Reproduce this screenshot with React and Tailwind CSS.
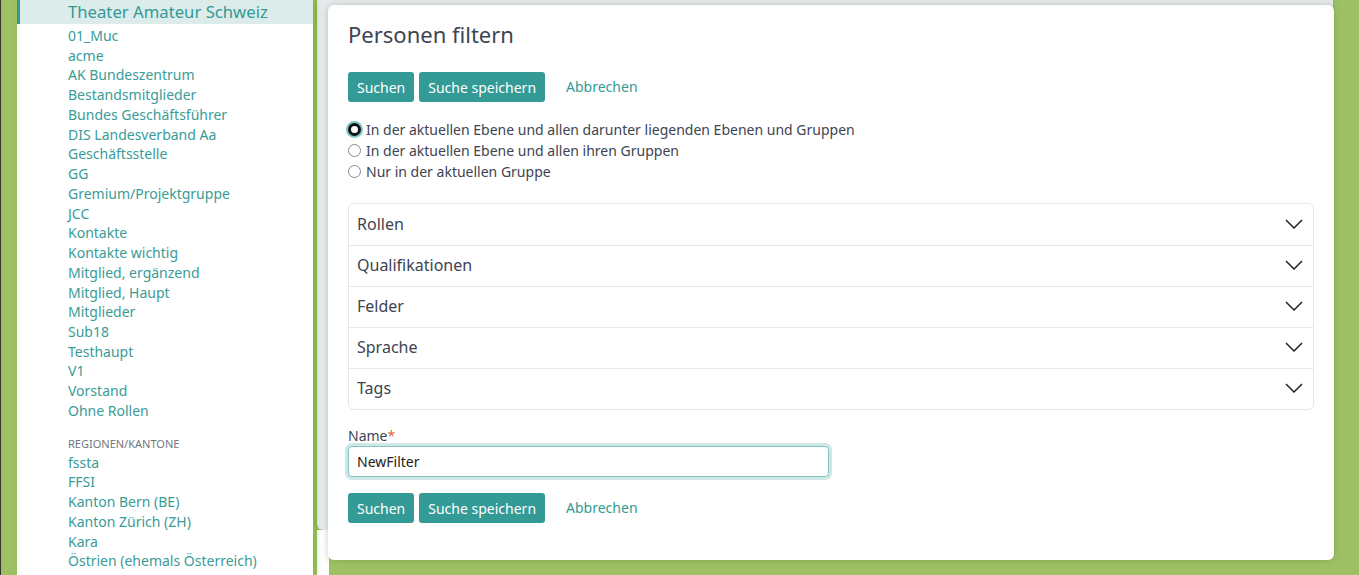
import React from "react";

const groups = [
  "01_Muc","acme","AK Bundeszentrum","Bestandsmitglieder","Bundes Geschäftsführer","DIS Landesverband Aa","Geschäftsstelle","GG","Gremium/Projektgruppe","JCC","Kontakte","Kontakte wichtig","Mitglied, ergänzend","Mitglied, Haupt","Mitglieder","Sub18","Testhaupt","V1","Vorstand","Ohne Rollen",
];
const regions = ["fssta","FFSI","Kanton Bern (BE)","Kanton Zürich (ZH)","Kara","Östrien (ehemals Österreich)"];
const sections = ["Rollen","Qualifikationen","Felder","Sprache","Tags"];

function Chevron() {
  return (
    <svg width="18" height="10" viewBox="0 0 18 10" fill="none">
      <polyline points="1,1 9,9 17,1" stroke="#222" strokeWidth="1.5" />
    </svg>
  );
}

function Buttons() {
  return (
    <div className="flex items-center gap-[5px]">
      <button className="h-[30px] px-[9px] rounded-[3px] bg-[#339a96] text-white text-[14px]">Suchen</button>
      <button className="h-[30px] px-[9px] rounded-[3px] bg-[#339a96] text-white text-[14px]">Suche speichern</button>
      <a className="ml-[16px] text-[14px] text-[#339a96] -mt-[2px]">Abbrechen</a>
    </div>
  );
}

function Radio({ checked, label }) {
  return (
    <label className="flex items-center h-[21px] text-[14px] text-[#3d4452]">
      {checked ? (
        <span className="w-[13px] h-[13px] rounded-full border-[3px] border-[#111] bg-white ring-[2px] ring-[#7cc8c4] mr-[5px] box-border" />
      ) : (
        <span className="w-[13px] h-[13px] rounded-full border-[1.5px] border-[#858a92] bg-white mr-[5px] box-border" />
      )}
      {label}
    </label>
  );
}

export default function App() {
  return (
    <div className="relative w-[1359px] h-[575px] overflow-hidden bg-[#9cc063] flex" style={{ fontFamily: '"Noto Sans", "Open Sans", sans-serif' }}>
      <div className="w-[1px] bg-[#333]" />
      <div className="w-[16px]" />
      <aside className="w-[296px] bg-white shadow-[3px_0_5px_rgba(120,170,60,0.5)] z-10 shrink-0">
        <div className="h-[25px] bg-[#dbeceb] border-l-[3px] border-[#339a96] pl-[48px] flex items-center text-[16.7px] text-[#339a96] -mt-[1px]">
          Theater Amateur Schweiz
        </div>
        <ul className="pt-[2px] pl-[51px]">
          {groups.map((g) => (
            <li key={g} className="text-[14px] leading-[19.74px] text-[#3a9c97]">{g}</li>
          ))}
        </ul>
        <div className="pl-[51px] mt-[14px] text-[11px] leading-[18px] text-[#74777d] uppercase">Regionen/Kantone</div>
        <ul className="pl-[51px]">
          {regions.map((g) => (
            <li key={g} className="text-[14px] leading-[19.74px] text-[#3a9c97]">{g}</li>
          ))}
        </ul>
      </aside>
      <div className="ml-[4px] flex flex-col">
        <div className="w-[1016px] h-[530px] bg-[#e7eaee] rounded-b-[6px] shadow-[-2px_0_4px_rgba(120,170,60,0.6)]" />
        <div className="w-[12px] flex-1 bg-white" />
      </div>

      <div className="absolute left-[328px] top-[5px] w-[1006px] h-[555px] bg-white rounded-[6px] shadow-[0_0_6px_rgba(90,120,50,0.35)] pl-[20px] pr-[20px] pt-[17px]">
        <h1 className="text-[22px] leading-[24px] text-[#3d4452]">Personen filtern</h1>
        <div className="mt-[26px]">
          <Buttons />
        </div>
        <div className="mt-[17px] flex flex-col">
          <Radio checked label="In der aktuellen Ebene und allen darunter liegenden Ebenen und Gruppen" />
          <Radio label="In der aktuellen Ebene und allen ihren Gruppen" />
          <Radio label="Nur in der aktuellen Gruppe" />
        </div>
        <div className="mt-[21px] w-[966px] border border-[#e5e7eb] rounded-[6px]">
          {sections.map((s, i) => (
            <div key={s} className={`h-[41px] flex items-center justify-between pl-[8px] pr-[10px] pb-[2px] ${i > 0 ? "border-t border-[#e5e7eb]" : ""}`}>
              <span className="text-[16px] text-[#3d4452]">{s}</span>
              <Chevron />
            </div>
          ))}
        </div>
        <div className="mt-[17px] text-[14px] leading-[18px] text-[#3d4452]">
          Name<span className="text-[#e0683f]">*</span>
        </div>
        <div className="mt-[1px] w-[481px] h-[31px] rounded-[4px] border border-[#85c4c1] ring-[3px] ring-[#cfe7e6] bg-white flex items-center pl-[8px] text-[14px] text-[#222]">
          NewFilter
        </div>
        <div className="mt-[16px]">
          <Buttons />
        </div>
      </div>
    </div>
  );
}
